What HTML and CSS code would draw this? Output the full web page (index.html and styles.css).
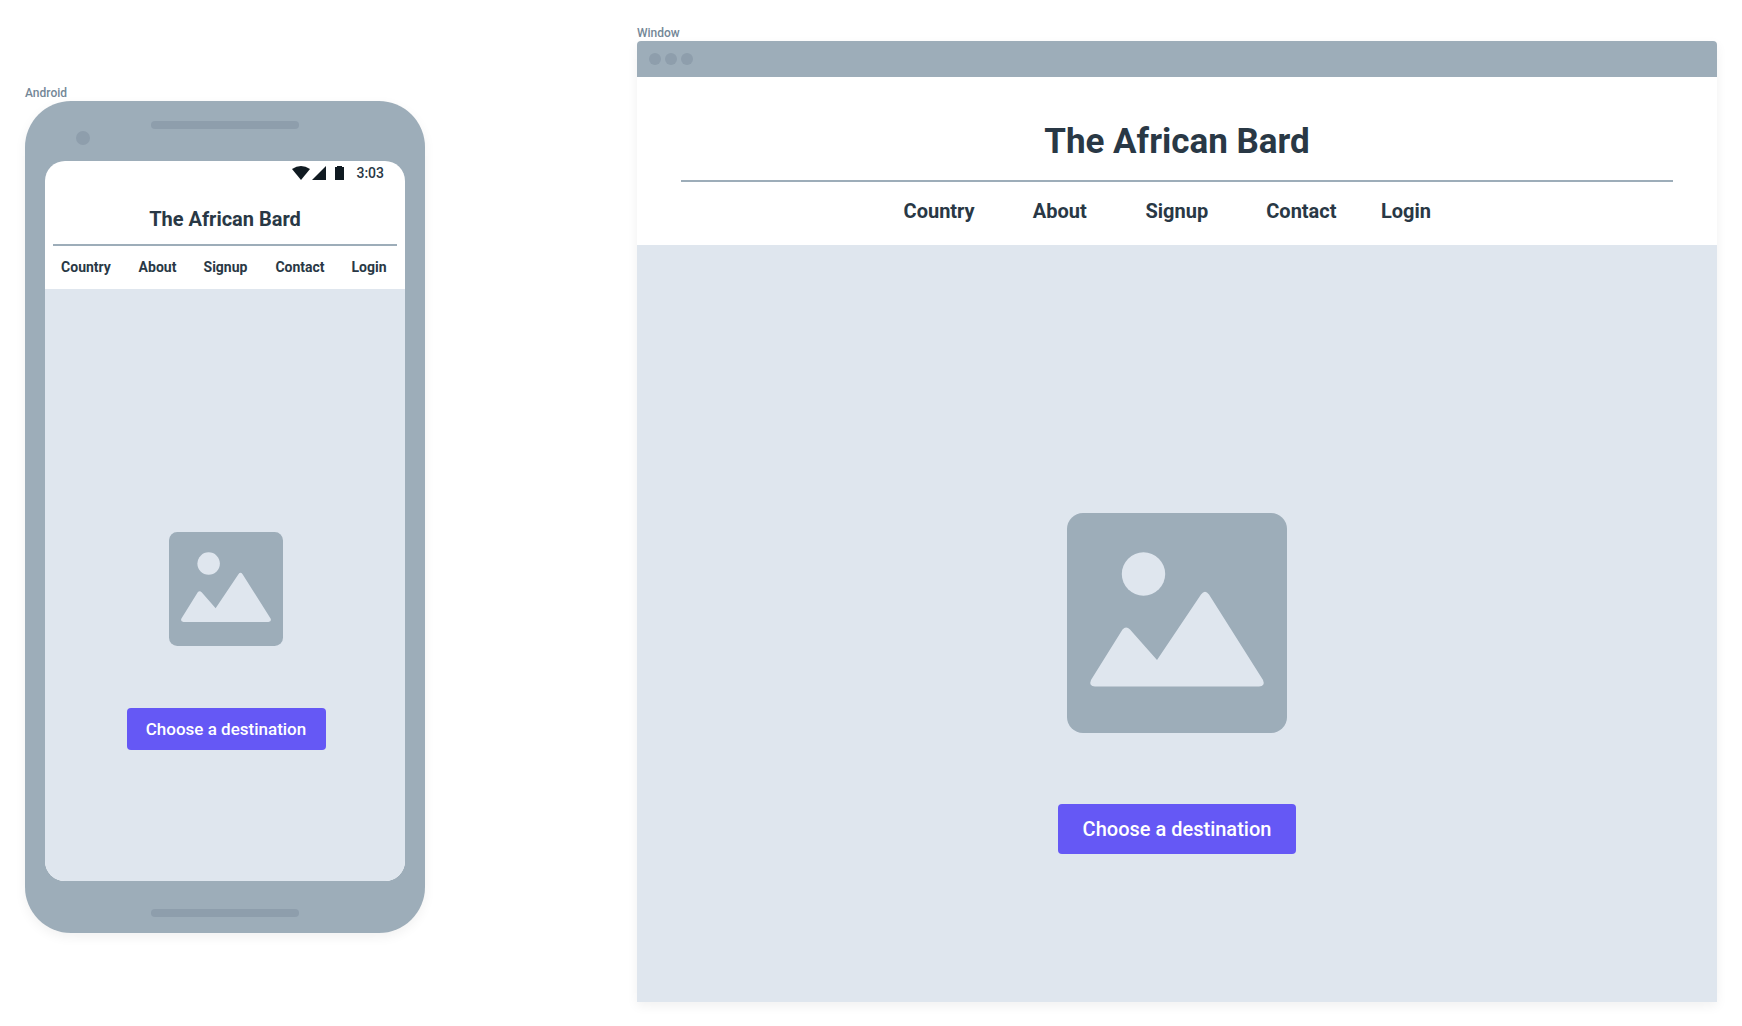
FILE: index.html
```html
<!DOCTYPE html>
<html lang="en">
<head>
<meta charset="utf-8">
<meta name="viewport" content="width=device-width, initial-scale=1">
<title>The African Bard – wireframes</title>
<link rel="stylesheet" href="styles.css">
</head>
<body>
<svg class="symbols" aria-hidden="true">
  <symbol id="picture" viewBox="0 0 220 220">
    <rect class="picture-frame" width="220" height="220" rx="16"/>
    <circle class="picture-shape" cx="76.500" cy="61" r="21.700"/>
    <path class="picture-shape" d="M24 167 L55.500 116.500 Q59 112.500 63 116.500 L90 147 L134 81.500 Q138 76 142 81.500 L196 167 Q198.500 173 192 173.500 L28 173.500 Q21.500 173 24 167Z"/>
  </symbol>
</svg>
<main class="board">
  <section class="device device-phone" aria-labelledby="phone-label">
    <h2 class="label" id="phone-label">Android</h2>
    <div class="phone">
      <div class="phone-top">
        <span class="camera"></span>
        <span class="speaker"></span>
      </div>
      <div class="screen">
        <div class="status">
          <svg class="status-icons" width="52" height="14" viewBox="0 0 52 14" aria-hidden="true">
            <path d="M0 3 Q9 -3 18 3 L9 14Z"/>
            <path d="M20 14 L34 0 V14Z"/>
            <path d="M43 1 H45 V0 H50 V1 H52 V14 H43Z"/>
          </svg>
          <time class="clock">3:03</time>
        </div>
        <header class="site-header">
          <h1 class="title">The African Bard</h1>
          <nav class="nav">
            <a href="#">Country</a>
            <a href="#">About</a>
            <a href="#">Signup</a>
            <a href="#">Contact</a>
            <a href="#">Login</a>
          </nav>
        </header>
        <div class="hero">
          <svg class="picture" aria-hidden="true"><use href="#picture"/></svg>
          <button class="cta" type="button">Choose a destination</button>
        </div>
      </div>
      <div class="phone-bottom"><span class="speaker"></span></div>
    </div>
  </section>

  <section class="device device-window" aria-labelledby="window-label">
    <h2 class="label" id="window-label">Window</h2>
    <div class="window">
      <div class="window-bar"><span class="dot"></span><span class="dot"></span><span class="dot"></span></div>
      <header class="site-header">
        <h1 class="title">The African Bard</h1>
        <nav class="nav">
          <a href="#">Country</a>
          <a href="#">About</a>
          <a href="#">Signup</a>
          <a href="#">Contact</a>
          <a href="#">Login</a>
        </nav>
      </header>
      <div class="hero">
        <svg class="picture" aria-hidden="true"><use href="#picture"/></svg>
        <button class="cta" type="button">Choose a destination</button>
      </div>
    </div>
  </section>
</main>
</body>
</html>
```
FILE: styles.css
```css
:root {
  --frame: #9dadb9;
  --frame-dark: #8e9eac;
  --pale: #dfe6ee;
  --ink: #293845;
  --accent: #6558f5;
}

* {
  box-sizing: border-box;
}

body {
  margin: 0;
  background: #fff;
  color: var(--ink);
  font-family: Roboto, "Liberation Sans", sans-serif;
}

h1,
h2 {
  margin: 0;
}

.symbols {
  display: none;
}

.board {
  display: grid;
  grid-template-columns: 400fr 1080fr;
  gap: 212px;
  min-height: 100vh;
  padding: 26px 25px 24px;
}

.device {
  display: flex;
  flex-direction: column;
}

.device-phone {
  padding-top: 60px;
}

.label {
  color: #748797;
  font-size: 12px;
  font-weight: 500;
  line-height: 15px;
}

.phone {
  padding: 0 20px;
  border-radius: 46px;
  background: var(--frame);
  box-shadow: 0 4px 12px rgba(0, 0, 0, 0.06);
}

.phone-top {
  display: grid;
  grid-template-columns: 1fr 148px 1fr;
  height: 60px;
  padding-top: 20px;
}

.camera {
  width: 14px;
  height: 14px;
  margin: 10px 0 0 31px;
  border-radius: 50%;
  background: var(--frame-dark);
}

.speaker {
  width: 148px;
  height: 8px;
  border-radius: 4px;
  background: var(--frame-dark);
}

.phone-bottom {
  display: flex;
  justify-content: center;
  height: 52px;
  padding-top: 28px;
}

.screen {
  display: flex;
  flex-direction: column;
  aspect-ratio: 1 / 2;
  border-radius: 20px;
  background: #fff;
  overflow: hidden;
}

.status {
  display: flex;
  align-items: center;
  justify-content: flex-end;
  gap: 12px;
  height: 24px;
  padding-right: 21px;
}

.status-icons {
  fill: #101a21;
}

.clock {
  font-size: 14px;
  font-weight: 500;
  line-height: 24px;
}

.site-header {
  background: #fff;
}

.title {
  border-bottom: 2px solid var(--frame);
  font-weight: 700;
  text-align: center;
}

.nav {
  display: grid;
  font-weight: 700;
  text-align: center;
}

.nav a {
  color: inherit;
  text-decoration: none;
}

.hero {
  display: flex;
  flex: 1;
  flex-direction: column;
  align-items: center;
  background: var(--pale);
}

.picture-frame {
  fill: var(--frame);
}

.picture-shape {
  fill: var(--pale);
}

.cta {
  padding: 0;
  border: 0;
  border-radius: 4px;
  background: var(--accent);
  color: #fff;
  font-family: inherit;
  font-weight: 500;
}

.phone .title {
  margin: 0 8px;
  padding: 21px 0 11px;
  font-size: 20px;
  line-height: 27px;
}

.phone .nav {
  grid-template-columns: 72fr 71fr 65fr 84fr 54fr;
  padding: 11px 9px 12px 5px;
  font-size: 14px;
  line-height: 20px;
}

.phone .hero {
  padding: 243px 0 0 2px;
}

.phone .picture {
  width: 114px;
  height: 114px;
}

.phone .cta {
  width: 199px;
  height: 42px;
  margin-top: 62px;
  font-size: 17px;
}

.window {
  display: flex;
  flex: 1;
  flex-direction: column;
  border-radius: 4px 4px 0 0;
  box-shadow: 0 4px 12px rgba(0, 0, 0, 0.06);
  overflow: hidden;
}

.window-bar {
  display: flex;
  align-items: center;
  gap: 4px;
  height: 36px;
  padding-left: 12px;
  background: var(--frame);
}

.dot {
  width: 12px;
  height: 12px;
  border-radius: 50%;
  background: var(--frame-dark);
}

.window .title {
  margin: 0 44px;
  padding: 43px 0 16px;
  font-size: 35px;
  line-height: 44px;
}

.window .nav {
  grid-template-columns: 129fr 112fr 122fr 127fr 82fr;
  margin: 0 25% 0 22%;
  padding: 15px 0 20px;
  font-size: 20px;
  line-height: 28px;
}

.window .hero {
  padding-top: 268px;
}

.window .picture {
  width: 220px;
  height: 220px;
}

.window .cta {
  width: 238px;
  height: 50px;
  margin-top: 71px;
  font-size: 20px;
}
```
